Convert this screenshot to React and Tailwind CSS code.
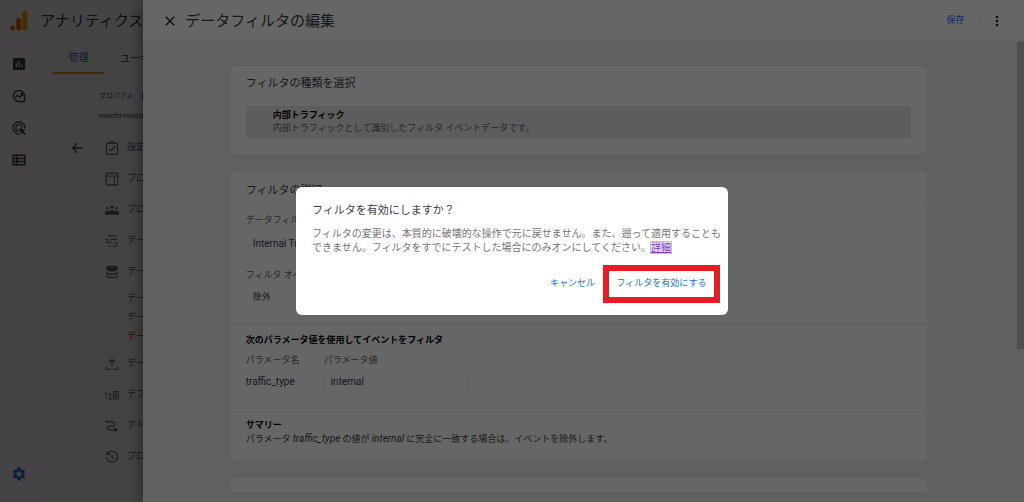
import React from "react";
import { MdSettings, MdInsertChart, MdAdsClick, MdArrowBack, MdClose, MdMoreVert } from "react-icons/md";

function Svg({ children, className = "size-[14px]" }) {
  return (
    <svg viewBox="0 0 24 24" fill="none" stroke="currentColor" strokeWidth="2" className={className} aria-hidden="true">
      {children}
    </svg>
  );
}

function Logo() {
  return (
    <svg viewBox="0 0 18 20" className="h-5 w-[18px] shrink-0" aria-hidden="true">
      <rect x="12.2" y="0" width="5.2" height="19.5" rx="2" fill="#f9ab00" />
      <rect x="6.2" y="7" width="5" height="12.5" rx="2" fill="#e37400" />
      <circle cx="2.6" cy="17" r="2.4" fill="#e37400" />
    </svg>
  );
}

const ExploreIcon = () => (
  <Svg>
    <path d="M21.500 21.500H12a9.500 9.500 0 1 1 9.500-9.500z" strokeWidth="2.4" />
    <path d="M5.500 14.500l4-4 3.500 3.500 5-5.500M14 8h4.400v4.400" strokeWidth="2.4" />
  </Svg>
);
const LibraryIcon = () => (
  <Svg>
    <path d="M2 4h20v16H2zM2 9.300h20M2 14.600h20M8 4v16" strokeWidth="2.6" />
  </Svg>
);
const ClipboardIcon = () => (
  <Svg>
    <rect x="2.500" y="3.500" width="19" height="19" rx="1.500" />
    <path d="M8 3.500l1.500-2h5l1.500 2" />
    <path d="M7 13l3.500 3.500L17.500 9" />
  </Svg>
);
const LayoutIcon = () => (
  <Svg>
    <rect x="2" y="2" width="20" height="20" rx="1" />
    <path d="M3 7h18M16 7v14" strokeWidth="1.500" />
  </Svg>
);
const PeopleIcon = () => (
  <Svg>
    <g fill="currentColor" stroke="none">
      <circle cx="4" cy="9" r="2.200" />
      <circle cx="12" cy="7" r="2.800" />
      <circle cx="20" cy="9" r="2.200" />
      <path d="M-1 20v-3c0-2 3-3.500 5-3.500l2.500.3c1.500-1 3.500-1.500 5.500-1.500s4 .5 5.500 1.500l2.500-.3c2 0 5 1.500 5 3.500v3z" />
    </g>
  </Svg>
);
const FlowIcon = () => (
  <Svg>
    <path d="M5 3h14M1 9h5M10 9h12M2 15h11M17 15h5M5 21h5M13 21h6" />
    <path d="M4 9v6M20 15v6" strokeWidth="1.500" />
  </Svg>
);
const StackIcon = () => (
  <Svg>
    <ellipse cx="12" cy="6" rx="9.500" ry="4" fill="currentColor" />
    <path d="M2.500 11.500c0 2.500 4 4.500 9.500 4.500s9.500-2 9.500-4.500M2.500 17c0 2.500 4 4.500 9.500 4.500s9.500-2 9.500-4.500" />
  </Svg>
);
const UploadIcon = () => (
  <Svg>
    <path d="M12 16V4M7 9l5-5 5 5M2 16v5h20v-5" />
  </Svg>
);
const IdentityIcon = () => (
  <Svg>
    <path d="M4 6L0 12M2 10v9M6 19h6M7 11h4M9 8v11M14 6h9v13h-9zM14 10.500h9M14 14.500h9M18.500 6v13" strokeWidth="1.500" />
  </Svg>
);
const PathIcon = () => (
  <Svg>
    <path d="M1 4h4M3 2v4M5 5h8a3.500 3.500 0 0 1 0 7.500H7a3 3 0 0 0 0 6h12M17 15.500l3.500 3-3.500 3" />
  </Svg>
);
const HistoryIcon = () => (
  <Svg>
    <path d="M4 7a9.300 9.300 0 1 1-1 6M4 2.500v5h5M12 8v5l3.500 1.500" />
  </Svg>
);

const navItems = [
  { label: "設定アシスタント", Icon: ClipboardIcon },
  { label: "プロパティ設定", Icon: LayoutIcon },
  { label: "プロパティのアクセス管理", Icon: PeopleIcon },
  { label: "データ ストリーム", Icon: FlowIcon },
  { label: "データ設定", Icon: StackIcon, children: ["データ収集", "データ保持", "データフィルタ"] },
  { label: "データ インポート", Icon: UploadIcon },
  { label: "デフォルトのレポート ID", Icon: IdentityIcon },
  { label: "アトリビューション設定", Icon: PathIcon },
  { label: "プロパティ変更履歴", Icon: HistoryIcon },
];

function Background() {
  return (
    <div className="flex h-full flex-col bg-[#fdfdfd] text-[#3c4043]">
      <header className="flex h-[42px] shrink-0 items-center gap-3 pl-[10px]">
        <Logo />
        <span className="text-[15px] whitespace-nowrap">アナリティクス</span>
      </header>
      <div className="flex min-h-0 flex-1">
        <nav aria-label="メイン" className="flex w-[38px] shrink-0 flex-col items-center gap-4 bg-[#fffaff] pt-[14px] pb-5">
          <button aria-label="レポート"><MdInsertChart className="size-4" /></button>
          <button aria-label="探索" className="flex h-4 items-center"><ExploreIcon /></button>
          <button aria-label="広告"><MdAdsClick className="size-4" /></button>
          <button aria-label="ライブラリ" className="flex h-4 items-center"><LibraryIcon /></button>
          <button aria-label="管理" className="mt-auto text-[#1a73e8]"><MdSettings className="size-4" /></button>
        </nav>
        <div className="min-w-0 flex-1 border-l-4 border-[#f3f3f3] bg-[#fafafa] pl-[11px]">
          <div className="flex h-8 text-[10px]">
            <button className="w-[51px] shrink-0 border-b-2 border-[#e8a33d] text-[#3367d6]">管理</button>
            <button className="pl-4 whitespace-nowrap">ユーザー</button>
          </div>
          <div className="flex flex-col gap-1 pt-[14px] pl-[46px]">
            <div className="flex h-4 items-center gap-2 text-[7px]">
              <span className="whitespace-nowrap">プロパティ</span>
              <button className="h-[13px] rounded-sm bg-[#1a73e8] px-2 whitespace-nowrap text-white">＋ プロパティを作成</button>
            </div>
            <span className="flex h-4 items-center text-[8px]">mochi-mochi-blog</span>
          </div>
          <div className="flex gap-5 pt-2">
            <button aria-label="戻る" className="flex size-8 shrink-0 items-center justify-center pl-4">
              <MdArrowBack className="size-4 shrink-0" />
            </button>
            <ul className="text-[9px] text-[#5f6368]">
              {navItems.map(({ label, Icon, children }) => (
                <li key={label}>
                  <a href="#" className="flex h-[31px] items-center gap-2 whitespace-nowrap">
                    <span className="shrink-0"><Icon /></span>
                    {label}
                  </a>
                  {children && (
                    <ul className="pt-0.5 pb-0.5 pl-[22px]">
                      {children.map((child, i) => (
                        <li key={child} className="h-[19px] whitespace-nowrap">
                          <a href="#" className={i === 2 ? "flex h-full items-center text-[#b3261e]" : "flex h-full items-center"}>{child}</a>
                        </li>
                      ))}
                    </ul>
                  )}
                </li>
              ))}
            </ul>
          </div>
        </div>
      </div>
    </div>
  );
}

function Sheet() {
  return (
    <section aria-label="データフィルタの編集" className="absolute inset-y-0 right-0 left-[14%] flex flex-col bg-[#f1f1f1] text-[9px] text-[#3c4043] shadow-[0_0_16px_rgba(0,0,0,0.5)]">
      <header className="flex h-[42px] shrink-0 items-center border-b border-[#e8e8e8] bg-white px-[19px] pt-px">
        <button aria-label="閉じる" className="text-[#202124]"><MdClose className="size-4" /></button>
        <h1 className="ml-[7px] text-[15px]">データフィルタの編集</h1>
        <button className="ml-auto h-[25px] w-[51px] rounded border border-[#f3f3f3] text-[#3367d6]">保存</button>
        <button aria-label="その他" className="ml-2 text-[#202124]"><MdMoreVert className="size-4" /></button>
      </header>
      <div className="flex min-h-0 flex-1">
        <div className="min-w-0 flex-1 pr-1 pb-[11px]">
          <div className="mx-auto flex h-full w-[81%] max-w-[697px] flex-col gap-[18px] overflow-hidden pt-6">
            <article className="shrink-0 rounded-md bg-white px-4 pb-4">
              <h2 className="flex h-10 items-center pb-1 text-[11px]">フィルタの種類を選択</h2>
              <button className="block h-8 w-full rounded bg-[#e9e9e9] px-[27px] text-left leading-[13px]">
                <strong className="block text-black">内部トラフィック</strong>
                <span className="block text-[#5f6368]">内部トラフィックとして識別したフィルタ イベントデータです。</span>
              </button>
            </article>
            <article className="shrink-0 rounded-md bg-white">
              <h2 className="flex h-8 items-center border-b border-[#f5f5f5] px-4 pt-2 text-[11px]">フィルタの詳細</h2>
              <div className="flex flex-col items-start border-b border-[#e6e6e6] px-4 pt-[6px] pb-[14px]">
                <label htmlFor="filter-name" className="flex h-[22px] items-center text-[#5f6368]">データフィルタ名</label>
                <input id="filter-name" defaultValue="Internal Traffic" className="h-[22px] w-48 rounded border border-[#fafafa] px-[6px] font-[Roboto] text-[10px]" />
                <label htmlFor="filter-op" className="mt-[11px] flex h-[22px] items-center text-[#5f6368]">フィルタ オペレーション</label>
                <select id="filter-op" className="h-[22px] w-48 appearance-none rounded border border-[#fafafa] px-[6px]">
                  <option>除外</option>
                </select>
              </div>
              <div className="border-b border-[#f8f8f8] px-4 pt-[6px] pb-4">
                <h3 className="h-5 leading-5 font-bold text-black">次のパラメータ値を使用してイベントをフィルタ</h3>
                <div className="flex">
                  <div className="w-[78px]">
                    <div className="h-5 leading-5 text-[#5f6368]">パラメータ名</div>
                    <div className="flex h-[22px] items-center font-[Roboto] text-[10px]">traffic_type</div>
                  </div>
                  <div>
                    <label htmlFor="param-value" className="block h-5 leading-5 text-[#5f6368]">パラメータ値</label>
                    <input id="param-value" defaultValue="internal" className="h-[22px] w-36 rounded border border-[#fafafa] px-[6px] font-[Roboto] text-[10px]" />
                  </div>
                </div>
              </div>
              <div className="px-4 pt-[10px] pb-[14px] leading-[13px]">
                <h3 className="font-bold text-black">サマリー</h3>
                <p>
                  パラメータ <em className="font-[Roboto] text-[10px]">traffic_type</em> の値が <em className="font-[Roboto] text-[10px]">internal</em> に完全に一致する場合は、イベントを除外します。
                </p>
              </div>
            </article>
            <div className="min-h-3 flex-1 rounded-t-md bg-white" />
          </div>
        </div>
        <div className="w-[7px] shrink-0">
          <div className="h-2/3 bg-[#c2c2c2]" />
        </div>
      </div>
    </section>
  );
}

function ConfirmDialog() {
  return (
    <div className="absolute inset-0 flex items-center justify-center bg-black/60">
      <div role="dialog" aria-modal="true" aria-labelledby="dialog-title" className="w-[432px] max-w-full rounded-md bg-white pt-3 pb-3 pl-4">
        <h2 id="dialog-title" className="flex h-6 items-center text-[11px] text-[#3c4043]">フィルタを有効にしますか？</h2>
        <p className="mt-1 text-[10px] leading-[14px] whitespace-nowrap text-[#757575]">
          フィルタの変更は、本質的に破壊的な操作で元に戻せません。また、遡って適用することも
          <br />
          できません。フィルタをすでにテストした場合にのみオンにしてください。
          <a href="#" className="bg-[#e9dff5] text-[#7b3fc4] underline outline outline-[#cdbbe6]">詳細</a>
        </p>
        <div className="mt-[10px] flex items-center justify-end gap-2 pr-2 text-[9px] text-[#1a73c8]">
          <button className="h-6">キャンセル</button>
          <button className="h-[38px] w-[117px] border-[6px] border-[#e81c24]">フィルタを有効にする</button>
        </div>
      </div>
    </div>
  );
}

export default function App() {
  return (
    <main className="relative h-screen overflow-hidden font-['Roboto','Noto_Sans_CJK_JP',sans-serif]">
      <Background />
      <div className="absolute inset-0 bg-black/32" />
      <Sheet />
      <ConfirmDialog />
    </main>
  );
}
